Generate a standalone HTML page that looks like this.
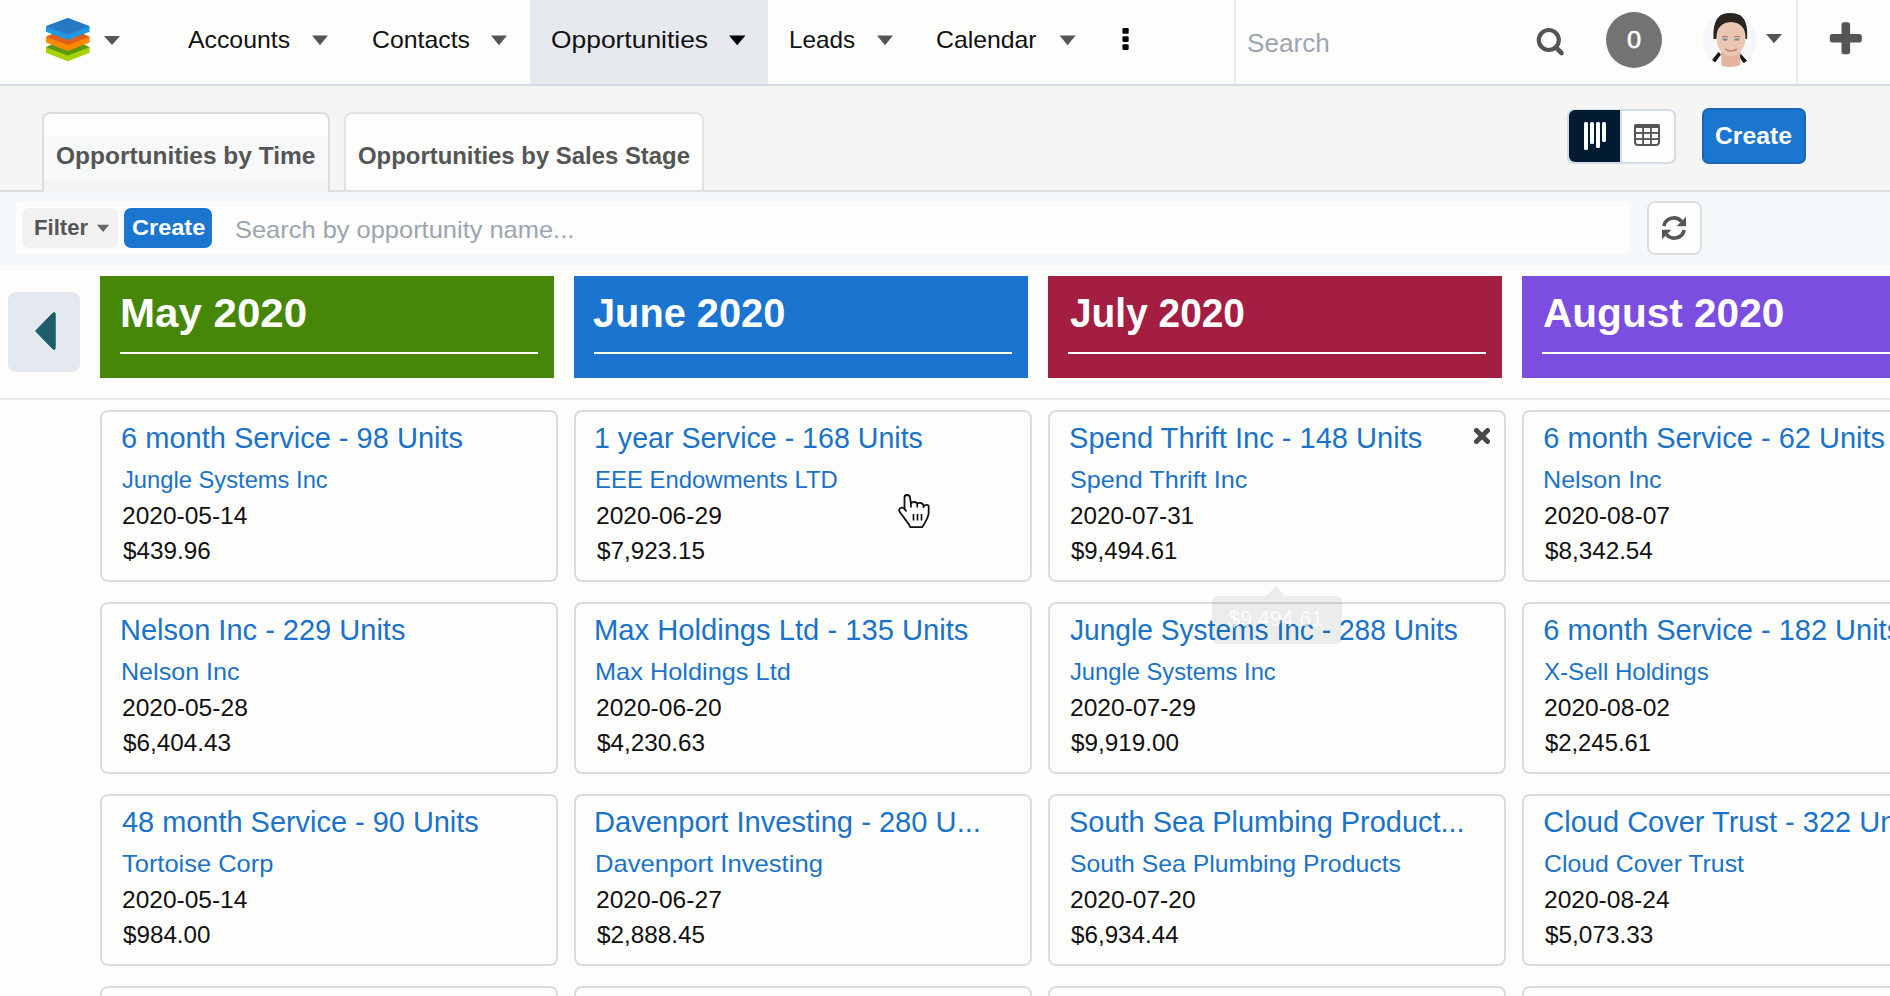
<!DOCTYPE html>
<html><head><meta charset="utf-8"><title>Opportunities</title>
<style>
html,body{margin:0;padding:0;}
body{width:1890px;height:996px;overflow:hidden;position:relative;background:#FDFDFB;font-family:"Liberation Sans",sans-serif;}
</style></head><body>
<div style="position:absolute;left:0px;top:0px;width:1890px;height:84px;background:#FDFDFB"></div>
<div style="position:absolute;left:0px;top:84px;width:1890px;height:2px;background:#D5DCE6"></div>
<div style="position:absolute;left:530px;top:0px;width:238px;height:84px;background:#E6E9EE"></div>
<svg style="position:absolute;left:0;top:0" width="1890" height="86">
<g>
 <polygon points="46,47.3 67.8,36.8 89.6,47.3 89.6,52.8 67.8,61.2 46,52.8" fill="#A9D000"/>
 <polygon points="46,47.3 67.8,36.8 89.6,47.3 67.8,55.5" fill="#5A9A12"/>
 <polygon points="46,37 67.8,26.5 89.6,37 89.6,42.5 67.8,51 46,42.5" fill="#FF8A00"/>
 <polygon points="46,37 67.8,26.5 89.6,37 67.8,45" fill="#DF5F1C"/>
 <polygon points="46,26.3 67.8,18 89.6,26.3 89.6,31.7 67.8,40 46,31.7" fill="#2199E2"/>
 <polygon points="46,26.3 67.8,18 89.6,26.3 67.8,34.7" fill="#2878C4"/>
</g>
<polygon points="104,36 120,36 112,45" fill="#555"/>
<polygon points="312,35.6 328,35.6 320,45.2" fill="#555"/>
<polygon points="491,35.6 507,35.6 499,45.2" fill="#555"/>
<polygon points="729,35.6 745.5,35.6 737.2,45.2" fill="#000"/>
<polygon points="877,35.6 893,35.6 885,45.2" fill="#555"/>
<polygon points="1059.6,35.6 1075.6,35.6 1067.6,45.2" fill="#555"/>
<polygon points="1766,34 1782,34 1774,43.3" fill="#555"/>
<rect x="1122.4" y="28" width="6.3" height="5.7" rx="1.3" fill="#000"/>
<rect x="1122.4" y="36.2" width="6.3" height="5.7" rx="1.3" fill="#000"/>
<rect x="1122.4" y="44.2" width="6.3" height="5.7" rx="1.3" fill="#000"/>
<rect x="1234" y="0" width="2" height="84" fill="#E6E9EE"/>
<rect x="1796" y="0" width="2" height="84" fill="#E6E9EE"/>
<circle cx="1548.8" cy="40" r="10" fill="none" stroke="#555" stroke-width="4.2"/>
<line x1="1556" y1="47.5" x2="1561.5" y2="53" stroke="#555" stroke-width="4.6" stroke-linecap="round"/>
<circle cx="1634" cy="40" r="28" fill="#737373"/>
<rect x="1829.8" y="34" width="32" height="8.6" rx="2.5" fill="#555"/>
<rect x="1841.5" y="22.3" width="8.6" height="32" rx="2.5" fill="#555"/>
</svg>
<svg style="position:absolute;left:1703px;top:13px" width="54" height="54" viewBox="0 0 54 54">
<defs><clipPath id="av"><circle cx="27" cy="27" r="27"/></clipPath></defs>
<g clip-path="url(#av)">
<rect width="54" height="54" fill="#F5F6FA"/>
<path d="M6,54 L14,41 L24,46 L30,46 L40,42 L48,54 Z" fill="#FBFBFB"/>
<path d="M7.5,49 L15.5,39 L18,41.5 L11,51 Z" fill="#141414"/>
<path d="M46,50 L37.5,40.5 L35.5,43 L42,52 Z" fill="#141414"/>
<path d="M18,36 L18.5,54 L37,54 L37.5,36 Z" fill="#E2B49C"/>
<ellipse cx="28" cy="25" rx="14.5" ry="18" fill="#EBC6B2"/>
<path d="M10.5,26 Q9,-1 28,-0.5 Q46,0 44,26 L42.5,26 Q43,10 28,9 Q13,10 13.5,26 Z" fill="#2A2320"/>
<ellipse cx="22" cy="26.5" rx="2.6" ry="1.3" fill="#7C8B94"/>
<ellipse cx="34" cy="26.5" rx="2.6" ry="1.3" fill="#7C8B94"/>
<path d="M19,24 Q22,22.5 25,24 M31,24 Q34,22.5 37,24" stroke="#9A6E5E" stroke-width="1" fill="none"/>
<path d="M22,36 Q28,40 34,36" stroke="#C47F78" stroke-width="1.6" fill="none"/>
</g></svg>
<div style="position:absolute;left:188.00px;top:25.18px;font-size:24px;line-height:29px;white-space:nowrap;color:#111;font-weight:400;transform:scaleX(1.0340);transform-origin:0 0;">Accounts</div>
<div style="position:absolute;left:371.50px;top:25.18px;font-size:24px;line-height:29px;white-space:nowrap;color:#111;font-weight:400;transform:scaleX(1.0341);transform-origin:0 0;">Contacts</div>
<div style="position:absolute;left:551.10px;top:25.18px;font-size:24px;line-height:29px;white-space:nowrap;color:#111;font-weight:400;transform:scaleX(1.1000);transform-origin:0 0;">Opportunities</div>
<div style="position:absolute;left:788.88px;top:25.18px;font-size:24px;line-height:29px;white-space:nowrap;color:#111;font-weight:400;transform:scaleX(1.0128);transform-origin:0 0;">Leads</div>
<div style="position:absolute;left:936.40px;top:25.18px;font-size:24px;line-height:29px;white-space:nowrap;color:#111;font-weight:400;transform:scaleX(1.0328);transform-origin:0 0;">Calendar</div>
<div style="position:absolute;left:1247.38px;top:27.12px;font-size:26.5px;line-height:32px;white-space:nowrap;color:#9CA5AF;font-weight:400;transform:scaleX(0.9848);transform-origin:0 0;">Search</div>
<div style="position:absolute;left:1627.32px;top:24.91px;font-size:24.5px;line-height:29px;white-space:nowrap;color:#FFFFFF;font-weight:400;transform:scaleX(1.0374);transform-origin:0 0;-webkit-text-stroke:0.6px #fff;">0</div>
<div style="position:absolute;left:0px;top:86px;width:1890px;height:106px;background:#F5F5F4"></div>
<div style="position:absolute;left:42px;top:112px;width:288px;height:80px;box-sizing:border-box;border:2px solid #DCDCDC;border-bottom:none;border-radius:8px 8px 0 0;background:#FDFDFB"></div>
<div style="position:absolute;left:44px;top:136px;width:284px;height:44px;background:#F7F8FA"></div>
<div style="position:absolute;left:44px;top:180px;width:284px;height:12px;background:#F4F4F2"></div>
<div style="position:absolute;left:56.04px;top:140.88px;font-size:24px;line-height:29px;white-space:nowrap;color:#555;font-weight:700;transform:scaleX(1.0203);transform-origin:0 0;">Opportunities by Time</div>
<div style="position:absolute;left:344px;top:112px;width:360px;height:80px;box-sizing:border-box;border:2px solid #E2E2E2;border-bottom:none;border-radius:8px 8px 0 0;background:#FDFDFB"></div>
<div style="position:absolute;left:357.54px;top:141.48px;font-size:24px;line-height:29px;white-space:nowrap;color:#555;font-weight:700;transform:scaleX(0.9958);transform-origin:0 0;">Opportunities by Sales Stage</div>
<div style="position:absolute;left:0px;top:190px;width:44px;height:2px;background:#DCDCDC"></div>
<div style="position:absolute;left:328px;top:190px;width:1562px;height:2px;background:#E0E0E0"></div>
<div style="position:absolute;left:1567px;top:108.5px;width:108.5px;height:55px;box-sizing:border-box;border:2px solid #D3DCE8;border-radius:7px;background:#FDFDFB"></div>
<div style="position:absolute;left:1568.5px;top:110px;width:51.5px;height:52px;background:#021B33;border-radius:6px 0 0 6px"></div>
<div style="position:absolute;left:1620px;top:110px;width:2px;height:52px;background:#D3DCE8"></div>
<svg style="position:absolute;left:0;top:0" width="1890" height="270">
<rect x="1584" y="122" width="4" height="28" rx="1.5" fill="#fff"/>
<rect x="1590" y="122" width="4" height="22" rx="1.5" fill="#fff"/>
<rect x="1596" y="122" width="4" height="26" rx="1.5" fill="#fff"/>
<rect x="1602" y="122" width="4" height="20" rx="1.5" fill="#fff"/>
<rect x="1635" y="125" width="24" height="20" rx="3" fill="none" stroke="#555" stroke-width="2"/>
<rect x="1634" y="124" width="26" height="4" rx="2" fill="#555"/>
<rect x="1642.2" y="126" width="1.8" height="19" fill="#555"/>
<rect x="1650.1" y="126" width="1.8" height="19" fill="#555"/>
<rect x="1635" y="132" width="24" height="1.9" fill="#555"/>
<rect x="1635" y="138.1" width="24" height="1.9" fill="#555"/>
</svg>
<div style="position:absolute;left:1702px;top:108px;width:104px;height:56px;box-sizing:border-box;background:#1B76D0;border:2px solid #1766B5;border-radius:7px"></div>
<div style="position:absolute;left:1715.34px;top:121.18px;font-size:24px;line-height:29px;white-space:nowrap;color:#FFFFFF;font-weight:700;transform:scaleX(1.0293);transform-origin:0 0;">Create</div>
<div style="position:absolute;left:0px;top:192px;width:1890px;height:73px;background:#F5F8FB"></div>
<div style="position:absolute;left:16px;top:201px;width:1614px;height:53px;background:#FDFDFB;border-radius:5px"></div>
<div style="position:absolute;left:22px;top:208px;width:95.5px;height:39.5px;background:#F2F2F2;border-radius:7px"></div>
<div style="position:absolute;left:34.16px;top:215.48px;font-size:22px;line-height:26px;white-space:nowrap;color:#555;font-weight:700;transform:scaleX(1.0050);transform-origin:0 0;">Filter</div>
<svg style="position:absolute;left:0;top:0" width="300" height="270"><polygon points="97,224.7 109.2,224.7 103.1,232.1" fill="#666"/></svg>
<div style="position:absolute;left:124px;top:208px;width:88px;height:39.5px;background:#1B76D0;border-radius:7px"></div>
<div style="position:absolute;left:131.62px;top:215.38px;font-size:22px;line-height:26px;white-space:nowrap;color:#FFFFFF;font-weight:700;transform:scaleX(1.0691);transform-origin:0 0;">Create</div>
<div style="position:absolute;left:235.30px;top:215.38px;font-size:24px;line-height:29px;white-space:nowrap;color:#9BA5B0;font-weight:400;transform:scaleX(1.0597);transform-origin:0 0;">Search by opportunity name...</div>
<div style="position:absolute;left:1646.5px;top:200.5px;width:55px;height:54.5px;box-sizing:border-box;border:2px solid #DEDEDE;border-radius:8px;background:#FDFDFB"></div>
<svg style="position:absolute;left:1662px;top:216px" width="24" height="24" viewBox="0 0 24 24">
<path d="M1.8,10 A10.2,10.2 0 0 1 19.6,5.6" fill="none" stroke="#555" stroke-width="3.6"/>
<polygon points="24,0.8 24,10.2 14.6,10.2" fill="#555"/>
<g transform="rotate(180 12 12)">
<path d="M1.8,10 A10.2,10.2 0 0 1 19.6,5.6" fill="none" stroke="#555" stroke-width="3.6"/>
<polygon points="24,0.8 24,10.2 14.6,10.2" fill="#555"/>
</g></svg>
<div style="position:absolute;left:0px;top:265px;width:1890px;height:731px;background:#FDFDFB"></div>
<div style="position:absolute;left:0px;top:398px;width:1890px;height:2px;background:#E9E9EC"></div>
<div style="position:absolute;left:8px;top:292px;width:72px;height:80px;background:#E3E9EE;border-radius:8px"></div>
<svg style="position:absolute;left:0;top:280px" width="90" height="100"><path d="M35.5,51 L52.5,33.5 Q55.2,31 55.2,34.5 L55.2,67.5 Q55.2,71 52.5,68.5 Z" fill="#1C5F6B" stroke="#1C5F6B" stroke-width="1" stroke-linejoin="round"/></svg>
<div style="position:absolute;left:100px;top:276px;width:454px;height:102px;background:#478707"></div>
<div style="position:absolute;left:120px;top:352px;width:418px;height:2px;background:#FFFFFF"></div>
<div style="position:absolute;left:119.53px;top:289.49px;font-size:41px;line-height:49px;white-space:nowrap;color:#FFFFFF;font-weight:700;transform:scaleX(1.0262);transform-origin:0 0;">May 2020</div>
<div style="position:absolute;left:100px;top:410.3px;width:458px;height:171.3px;box-sizing:border-box;border:2px solid #DCDCDC;border-radius:8px;background:#FDFDFB"></div>
<div style="position:absolute;left:121.35px;top:420.55px;font-size:29px;line-height:35px;white-space:nowrap;color:#1A73C8;font-weight:400;transform:scaleX(1.0012);transform-origin:0 0;">6 month Service - 98 Units</div>
<div style="position:absolute;left:122.32px;top:464.88px;font-size:24px;line-height:29px;white-space:nowrap;color:#1A73C8;font-weight:400;transform:scaleX(0.9885);transform-origin:0 0;">Jungle Systems Inc</div>
<div style="position:absolute;left:121.60px;top:500.68px;font-size:24px;line-height:29px;white-space:nowrap;color:#111;font-weight:400;transform:scaleX(1.0210);transform-origin:0 0;">2020-05-14</div>
<div style="position:absolute;left:122.56px;top:536.38px;font-size:24px;line-height:29px;white-space:nowrap;color:#111;font-weight:400;transform:scaleX(1.0112);transform-origin:0 0;">$439.96</div>
<div style="position:absolute;left:100px;top:602.3px;width:458px;height:171.3px;box-sizing:border-box;border:2px solid #DCDCDC;border-radius:8px;background:#FDFDFB"></div>
<div style="position:absolute;left:120.48px;top:612.55px;font-size:29px;line-height:35px;white-space:nowrap;color:#1A73C8;font-weight:400;transform:scaleX(1.0004);transform-origin:0 0;">Nelson Inc - 229 Units</div>
<div style="position:absolute;left:120.88px;top:656.88px;font-size:24px;line-height:29px;white-space:nowrap;color:#1A73C8;font-weight:400;transform:scaleX(1.0457);transform-origin:0 0;">Nelson Inc</div>
<div style="position:absolute;left:121.60px;top:692.68px;font-size:24px;line-height:29px;white-space:nowrap;color:#111;font-weight:400;transform:scaleX(1.0251);transform-origin:0 0;">2020-05-28</div>
<div style="position:absolute;left:122.56px;top:728.38px;font-size:24px;line-height:29px;white-space:nowrap;color:#111;font-weight:400;transform:scaleX(1.0127);transform-origin:0 0;">$6,404.43</div>
<div style="position:absolute;left:100px;top:794.3px;width:458px;height:171.3px;box-sizing:border-box;border:2px solid #DCDCDC;border-radius:8px;background:#FDFDFB"></div>
<div style="position:absolute;left:122.22px;top:804.55px;font-size:29px;line-height:35px;white-space:nowrap;color:#1A73C8;font-weight:400;transform:scaleX(0.9971);transform-origin:0 0;">48 month Service - 90 Units</div>
<div style="position:absolute;left:122.32px;top:848.88px;font-size:24px;line-height:29px;white-space:nowrap;color:#1A73C8;font-weight:400;transform:scaleX(1.0604);transform-origin:0 0;">Tortoise Corp</div>
<div style="position:absolute;left:121.60px;top:884.68px;font-size:24px;line-height:29px;white-space:nowrap;color:#111;font-weight:400;transform:scaleX(1.0210);transform-origin:0 0;">2020-05-14</div>
<div style="position:absolute;left:122.56px;top:920.38px;font-size:24px;line-height:29px;white-space:nowrap;color:#111;font-weight:400;transform:scaleX(1.0084);transform-origin:0 0;">$984.00</div>
<div style="position:absolute;left:100px;top:986.3px;width:458px;height:171.3px;box-sizing:border-box;border:2px solid #DCDCDC;border-radius:8px;background:#FDFDFB"></div>
<div style="position:absolute;left:574px;top:276px;width:454px;height:102px;background:#1B74CF"></div>
<div style="position:absolute;left:594px;top:352px;width:418px;height:2px;background:#FFFFFF"></div>
<div style="position:absolute;left:593.18px;top:289.49px;font-size:41px;line-height:49px;white-space:nowrap;color:#FFFFFF;font-weight:700;transform:scaleX(0.9695);transform-origin:0 0;">June 2020</div>
<div style="position:absolute;left:574px;top:410.3px;width:458px;height:171.3px;box-sizing:border-box;border:2px solid #DCDCDC;border-radius:8px;background:#FDFDFB"></div>
<div style="position:absolute;left:594.48px;top:420.55px;font-size:29px;line-height:35px;white-space:nowrap;color:#1A73C8;font-weight:400;transform:scaleX(0.9857);transform-origin:0 0;">1 year Service - 168 Units</div>
<div style="position:absolute;left:594.88px;top:464.88px;font-size:24px;line-height:29px;white-space:nowrap;color:#1A73C8;font-weight:400;transform:scaleX(0.9966);transform-origin:0 0;">EEE Endowments LTD</div>
<div style="position:absolute;left:595.60px;top:500.68px;font-size:24px;line-height:29px;white-space:nowrap;color:#111;font-weight:400;transform:scaleX(1.0251);transform-origin:0 0;">2020-06-29</div>
<div style="position:absolute;left:596.56px;top:536.38px;font-size:24px;line-height:29px;white-space:nowrap;color:#111;font-weight:400;transform:scaleX(1.0104);transform-origin:0 0;">$7,923.15</div>
<div style="position:absolute;left:574px;top:602.3px;width:458px;height:171.3px;box-sizing:border-box;border:2px solid #DCDCDC;border-radius:8px;background:#FDFDFB"></div>
<div style="position:absolute;left:594.48px;top:612.55px;font-size:29px;line-height:35px;white-space:nowrap;color:#1A73C8;font-weight:400;transform:scaleX(1.0055);transform-origin:0 0;">Max Holdings Ltd - 135 Units</div>
<div style="position:absolute;left:594.88px;top:656.88px;font-size:24px;line-height:29px;white-space:nowrap;color:#1A73C8;font-weight:400;transform:scaleX(1.0560);transform-origin:0 0;">Max Holdings Ltd</div>
<div style="position:absolute;left:595.60px;top:692.68px;font-size:24px;line-height:29px;white-space:nowrap;color:#111;font-weight:400;transform:scaleX(1.0230);transform-origin:0 0;">2020-06-20</div>
<div style="position:absolute;left:596.56px;top:728.38px;font-size:24px;line-height:29px;white-space:nowrap;color:#111;font-weight:400;transform:scaleX(1.0127);transform-origin:0 0;">$4,230.63</div>
<div style="position:absolute;left:574px;top:794.3px;width:458px;height:171.3px;box-sizing:border-box;border:2px solid #DCDCDC;border-radius:8px;background:#FDFDFB"></div>
<div style="position:absolute;left:594.48px;top:804.55px;font-size:29px;line-height:35px;white-space:nowrap;color:#1A73C8;font-weight:400;transform:scaleX(1.0043);transform-origin:0 0;">Davenport Investing - 280 U...</div>
<div style="position:absolute;left:594.88px;top:848.88px;font-size:24px;line-height:29px;white-space:nowrap;color:#1A73C8;font-weight:400;transform:scaleX(1.0676);transform-origin:0 0;">Davenport Investing</div>
<div style="position:absolute;left:595.60px;top:884.68px;font-size:24px;line-height:29px;white-space:nowrap;color:#111;font-weight:400;transform:scaleX(1.0251);transform-origin:0 0;">2020-06-27</div>
<div style="position:absolute;left:596.56px;top:920.38px;font-size:24px;line-height:29px;white-space:nowrap;color:#111;font-weight:400;transform:scaleX(1.0104);transform-origin:0 0;">$2,888.45</div>
<div style="position:absolute;left:574px;top:986.3px;width:458px;height:171.3px;box-sizing:border-box;border:2px solid #DCDCDC;border-radius:8px;background:#FDFDFB"></div>
<div style="position:absolute;left:1048px;top:276px;width:454px;height:102px;background:#A41E42"></div>
<div style="position:absolute;left:1068px;top:352px;width:418px;height:2px;background:#FFFFFF"></div>
<div style="position:absolute;left:1069.58px;top:289.49px;font-size:41px;line-height:49px;white-space:nowrap;color:#FFFFFF;font-weight:700;transform:scaleX(0.9477);transform-origin:0 0;">July 2020</div>
<div style="position:absolute;left:1048px;top:410.3px;width:458px;height:171.3px;box-sizing:border-box;border:2px solid #DCDCDC;border-radius:8px;background:#FDFDFB"></div>
<div style="position:absolute;left:1069.35px;top:420.55px;font-size:29px;line-height:35px;white-space:nowrap;color:#1A73C8;font-weight:400;transform:scaleX(1.0025);transform-origin:0 0;">Spend Thrift Inc - 148 Units</div>
<div style="position:absolute;left:1069.60px;top:464.88px;font-size:24px;line-height:29px;white-space:nowrap;color:#1A73C8;font-weight:400;transform:scaleX(1.0489);transform-origin:0 0;">Spend Thrift Inc</div>
<div style="position:absolute;left:1069.60px;top:500.68px;font-size:24px;line-height:29px;white-space:nowrap;color:#111;font-weight:400;transform:scaleX(1.0110);transform-origin:0 0;">2020-07-31</div>
<div style="position:absolute;left:1070.56px;top:536.38px;font-size:24px;line-height:29px;white-space:nowrap;color:#111;font-weight:400;transform:scaleX(0.9966);transform-origin:0 0;">$9,494.61</div>
<div style="position:absolute;left:1048px;top:602.3px;width:458px;height:171.3px;box-sizing:border-box;border:2px solid #DCDCDC;border-radius:8px;background:#FDFDFB"></div>
<div style="position:absolute;left:1070.22px;top:612.55px;font-size:29px;line-height:35px;white-space:nowrap;color:#1A73C8;font-weight:400;transform:scaleX(0.9701);transform-origin:0 0;">Jungle Systems Inc - 288 Units</div>
<div style="position:absolute;left:1070.32px;top:656.88px;font-size:24px;line-height:29px;white-space:nowrap;color:#1A73C8;font-weight:400;transform:scaleX(0.9885);transform-origin:0 0;">Jungle Systems Inc</div>
<div style="position:absolute;left:1069.60px;top:692.68px;font-size:24px;line-height:29px;white-space:nowrap;color:#111;font-weight:400;transform:scaleX(1.0251);transform-origin:0 0;">2020-07-29</div>
<div style="position:absolute;left:1070.56px;top:728.38px;font-size:24px;line-height:29px;white-space:nowrap;color:#111;font-weight:400;transform:scaleX(1.0104);transform-origin:0 0;">$9,919.00</div>
<div style="position:absolute;left:1048px;top:794.3px;width:458px;height:171.3px;box-sizing:border-box;border:2px solid #DCDCDC;border-radius:8px;background:#FDFDFB"></div>
<div style="position:absolute;left:1069.35px;top:804.55px;font-size:29px;line-height:35px;white-space:nowrap;color:#1A73C8;font-weight:400;transform:scaleX(0.9976);transform-origin:0 0;">South Sea Plumbing Product...</div>
<div style="position:absolute;left:1069.60px;top:848.88px;font-size:24px;line-height:29px;white-space:nowrap;color:#1A73C8;font-weight:400;transform:scaleX(1.0336);transform-origin:0 0;">South Sea Plumbing Products</div>
<div style="position:absolute;left:1069.60px;top:884.68px;font-size:24px;line-height:29px;white-space:nowrap;color:#111;font-weight:400;transform:scaleX(1.0230);transform-origin:0 0;">2020-07-20</div>
<div style="position:absolute;left:1070.56px;top:920.38px;font-size:24px;line-height:29px;white-space:nowrap;color:#111;font-weight:400;transform:scaleX(1.0081);transform-origin:0 0;">$6,934.44</div>
<div style="position:absolute;left:1048px;top:986.3px;width:458px;height:171.3px;box-sizing:border-box;border:2px solid #DCDCDC;border-radius:8px;background:#FDFDFB"></div>
<div style="position:absolute;left:1522px;top:276px;width:454px;height:102px;background:#7B4DE0"></div>
<div style="position:absolute;left:1542px;top:352px;width:418px;height:2px;background:#FFFFFF"></div>
<div style="position:absolute;left:1543.17px;top:289.49px;font-size:41px;line-height:49px;white-space:nowrap;color:#FFFFFF;font-weight:700;transform:scaleX(0.9897);transform-origin:0 0;">August 2020</div>
<div style="position:absolute;left:1522px;top:410.3px;width:458px;height:171.3px;box-sizing:border-box;border:2px solid #DCDCDC;border-radius:8px;background:#FDFDFB"></div>
<div style="position:absolute;left:1543.35px;top:420.55px;font-size:29px;line-height:35px;white-space:nowrap;color:#1A73C8;font-weight:400;transform:scaleX(1.0000);transform-origin:0 0;">6 month Service - 62 Units</div>
<div style="position:absolute;left:1542.88px;top:464.88px;font-size:24px;line-height:29px;white-space:nowrap;color:#1A73C8;font-weight:400;transform:scaleX(1.0466);transform-origin:0 0;">Nelson Inc</div>
<div style="position:absolute;left:1543.60px;top:500.68px;font-size:24px;line-height:29px;white-space:nowrap;color:#111;font-weight:400;transform:scaleX(1.0267);transform-origin:0 0;">2020-08-07</div>
<div style="position:absolute;left:1544.56px;top:536.38px;font-size:24px;line-height:29px;white-space:nowrap;color:#111;font-weight:400;transform:scaleX(1.0100);transform-origin:0 0;">$8,342.54</div>
<div style="position:absolute;left:1522px;top:602.3px;width:458px;height:171.3px;box-sizing:border-box;border:2px solid #DCDCDC;border-radius:8px;background:#FDFDFB"></div>
<div style="position:absolute;left:1543.35px;top:612.55px;font-size:29px;line-height:35px;white-space:nowrap;color:#1A73C8;font-weight:400;">6 month Service - 182 Units</div>
<div style="position:absolute;left:1544.08px;top:656.88px;font-size:24px;line-height:29px;white-space:nowrap;color:#1A73C8;font-weight:400;transform:scaleX(1.0038);transform-origin:0 0;">X-Sell Holdings</div>
<div style="position:absolute;left:1543.60px;top:692.68px;font-size:24px;line-height:29px;white-space:nowrap;color:#111;font-weight:400;transform:scaleX(1.0267);transform-origin:0 0;">2020-08-02</div>
<div style="position:absolute;left:1544.56px;top:728.38px;font-size:24px;line-height:29px;white-space:nowrap;color:#111;font-weight:400;transform:scaleX(0.9928);transform-origin:0 0;">$2,245.61</div>
<div style="position:absolute;left:1522px;top:794.3px;width:458px;height:171.3px;box-sizing:border-box;border:2px solid #DCDCDC;border-radius:8px;background:#FDFDFB"></div>
<div style="position:absolute;left:1543.35px;top:804.55px;font-size:29px;line-height:35px;white-space:nowrap;color:#1A73C8;font-weight:400;">Cloud Cover Trust - 322 Units</div>
<div style="position:absolute;left:1543.60px;top:848.88px;font-size:24px;line-height:29px;white-space:nowrap;color:#1A73C8;font-weight:400;transform:scaleX(1.0339);transform-origin:0 0;">Cloud Cover Trust</div>
<div style="position:absolute;left:1543.60px;top:884.68px;font-size:24px;line-height:29px;white-space:nowrap;color:#111;font-weight:400;transform:scaleX(1.0227);transform-origin:0 0;">2020-08-24</div>
<div style="position:absolute;left:1544.56px;top:920.38px;font-size:24px;line-height:29px;white-space:nowrap;color:#111;font-weight:400;transform:scaleX(1.0146);transform-origin:0 0;">$5,073.33</div>
<div style="position:absolute;left:1522px;top:986.3px;width:458px;height:171.3px;box-sizing:border-box;border:2px solid #DCDCDC;border-radius:8px;background:#FDFDFB"></div>
<svg style="position:absolute;left:1474px;top:428px" width="16" height="16" viewBox="0 0 16 16"><path d="M2.5,2.5 L13.5,13.5 M13.5,2.5 L2.5,13.5" stroke="#4A4A4A" stroke-width="5" stroke-linecap="round"/></svg>
<div style="position:absolute;left:1212px;top:586px;width:130px;height:58px;opacity:0.065">
<svg style="position:absolute;left:0;top:0" width="130" height="12"><polygon points="54,10.5 63.7,0 73.5,10.5" fill="#0A1A2A"/></svg>
<div style="position:absolute;left:0;top:10px;width:130px;height:48px;background:#0A1A2A;border-radius:6px"></div>
</div>
<div style="position:absolute;left:1227.78px;top:606.38px;font-size:22px;line-height:26px;white-space:nowrap;color:rgba(255,255,255,0.8);font-weight:400;transform:scaleX(0.9733);transform-origin:0 0;">$9,494.61</div>
<svg style="position:absolute;left:897px;top:492.5px" width="36" height="38" viewBox="-2 -2 36 38">
<path d="M8,0 C6.5,0 5.5,1 5.5,2.5 L5.5,14 C4.5,12.8 3,12.3 1.5,13 C0,13.8 -0.2,15.3 0.6,16.8 L9.9,29.4 L11.3,32.1 L23.2,32.1 L25,29.4 C27.5,25 29.5,21 29.6,18.8 L29.7,11.5 C29.7,10.3 28.7,9.7 27.6,9.8 C26.3,9.9 25.2,10.6 24.6,11.2 C24.4,9.4 23.2,8.3 21.6,7.9 C20.3,7.7 19.1,8 18.2,8.7 C17.8,7.6 16.4,6.9 15,7 C13.8,7.1 12.8,7.5 11.9,8.1 L11,2.5 C10.8,1 9.6,0 8,0 Z" fill="#fff" stroke="#111" stroke-width="1.8" stroke-linejoin="round"/>
<path d="M11.9,8.1 L12,12.5 M18.2,8.7 L18.3,12.5 M24.6,11.2 L24.6,13 M14.5,19 L14.5,25.5 M18.5,19 L18.5,25.5 M22.5,19 L22.5,25.5 M5.5,14 L7.5,16.5" stroke="#000" stroke-width="1.6" fill="none"/>
</svg>
</body></html>
